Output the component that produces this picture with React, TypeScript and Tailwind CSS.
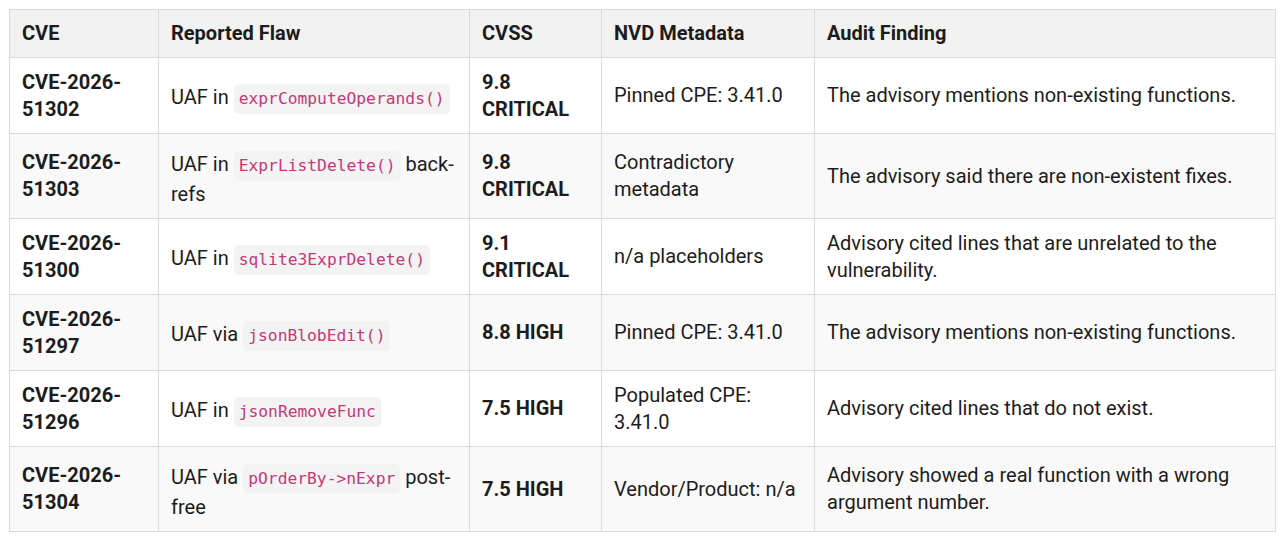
import React from 'react';

type Part = string | { code: string };

type Row = {
  cve: string;
  flaw: Part[];
  cvss: string;
  nvd: string;
  finding: string;
};

const rows: Row[] = [
  { cve: 'CVE-2026-51302', flaw: ['UAF in ', { code: 'exprComputeOperands()' }], cvss: '9.8 CRITICAL', nvd: 'Pinned CPE: 3.41.0', finding: 'The advisory mentions non-existing functions.' },
  { cve: 'CVE-2026-51303', flaw: ['UAF in ', { code: 'ExprListDelete()' }, ' back-refs'], cvss: '9.8 CRITICAL', nvd: 'Contradictory metadata', finding: 'The advisory said there are non-existent fixes.' },
  { cve: 'CVE-2026-51300', flaw: ['UAF in ', { code: 'sqlite3ExprDelete()' }], cvss: '9.1 CRITICAL', nvd: 'n/a placeholders', finding: 'Advisory cited lines that are unrelated to the vulnerability.' },
  { cve: 'CVE-2026-51297', flaw: ['UAF via ', { code: 'jsonBlobEdit()' }], cvss: '8.8 HIGH', nvd: 'Pinned CPE: 3.41.0', finding: 'The advisory mentions non-existing functions.' },
  { cve: 'CVE-2026-51296', flaw: ['UAF in ', { code: 'jsonRemoveFunc' }], cvss: '7.5 HIGH', nvd: 'Populated CPE: 3.41.0', finding: 'Advisory cited lines that do not exist.' },
  { cve: 'CVE-2026-51304', flaw: ['UAF via ', { code: 'pOrderBy->nExpr' }, ' post-free'], cvss: '7.5 HIGH', nvd: 'Vendor/Product: n/a', finding: 'Advisory showed a real function with a wrong argument number.' },
];

const head = 'border border-[#dadada] px-3 py-[10px] align-middle font-bold';
const cell = 'border border-[#dadada] px-3 py-[10.5px] align-middle';

export default function App() {
  return (
    <div className="bg-white pl-[9px] pt-[9px] font-['Roboto',sans-serif] text-[20px] leading-[27px] text-[#1c1c1c]">
      <table className="w-[1267px] table-fixed border-collapse text-left">
        <colgroup>
          <col className="w-[149px]" />
          <col className="w-[311px]" />
          <col className="w-[132px]" />
          <col className="w-[213px]" />
          <col />
        </colgroup>
        <thead>
          <tr className="bg-[#f2f2f2]">
            <th className={head}>CVE</th>
            <th className={head}>Reported Flaw</th>
            <th className={head}>CVSS</th>
            <th className={head}>NVD Metadata</th>
            <th className={head}>Audit Finding</th>
          </tr>
        </thead>
        <tbody>
          {rows.map((r, idx) => (
            <tr key={r.cve} className={idx % 2 === 1 ? 'bg-[#f9f9f9]' : 'bg-white'}>
              <td className={`${cell} font-bold`}>{r.cve}</td>
              <td className={cell}>
                {r.flaw.map((p, i) =>
                  typeof p === 'string' ? (
                    <span key={i}>{p}</span>
                  ) : (
                    <code
                      key={i}
                      className="mt-[6px] inline-block rounded-[5px] bg-[#f3f3f3] px-[5px] py-[3px] font-['DejaVu_Sans_Mono',monospace] text-[16.3px] leading-[24px] text-[#c3397a]"
                    >
                      {p.code}
                    </code>
                  )
                )}
              </td>
              <td className={`${cell} font-bold`}>{r.cvss}</td>
              <td className={cell}>{r.nvd}</td>
              <td className={cell}>{r.finding}</td>
            </tr>
          ))}
        </tbody>
      </table>
    </div>
  );
}
